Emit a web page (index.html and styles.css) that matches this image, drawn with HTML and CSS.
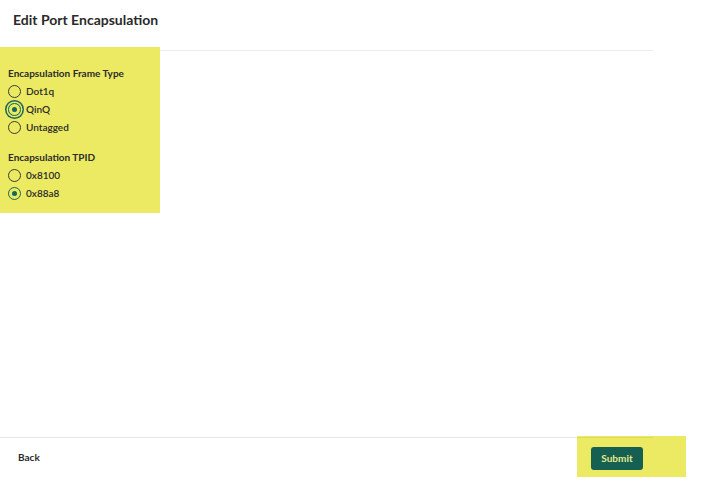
FILE: index.html
```html
<!DOCTYPE html>
<html lang="en">

<head>
    <meta charset="UTF-8">
    <meta name="viewport" content="width=device-width, initial-scale=1.0">
    <title>Edit Port Encapsulation</title>
    <link rel="stylesheet" href="styles.css">
</head>

<body>
    <div class="page">
        <div class="head">
            <h1>Edit Port Encapsulation</h1>
        </div>
        <div class="form">
            <div class="group-title">Encapsulation Frame Type</div>
            <label class="opt"><span class="radio"></span>Dot1q</label>
            <label class="opt"><span class="radio on focus"></span>QinQ</label>
            <label class="opt"><span class="radio"></span>Untagged</label>
            <div class="group-title second">Encapsulation TPID</div>
            <label class="opt"><span class="radio"></span>0x8100</label>
            <label class="opt"><span class="radio on"></span>0x88a8</label>
        </div>
        <div class="fill"></div>
        <div class="foot">
            <a class="back" href="javascript:;">Back</a>
            <div class="submit-wrap">
                <button class="submit">Submit</button>
            </div>
        </div>
    </div>
</body>

</html>
```

FILE: styles.css
```css
* {
    margin: 0;
    padding: 0;
    box-sizing: border-box;
}

body {
    font-family: Lato, "Liberation Sans", sans-serif;
    color: #2b2b2b;
    background: #fff;
}

.page {
    width: 653px;
    height: 483px;
    display: flex;
    flex-direction: column;
}

.head {
    height: 51px;
    border-bottom: 1px solid #ececec;
    padding: 11px 0 0 13px;
}

.head h1 {
    font-size: 14px;
    line-height: 18px;
    font-weight: 700;
    color: #2a2a2a;
}

.form {
    position: relative;
    margin-top: -4px;
    width: 160px;
    height: 166px;
    background: #ecea62;
    padding: 19px 8px 0 8px;
}

.group-title {
    font-size: 10px;
    line-height: 14px;
    font-weight: 700;
    margin-bottom: 2px;
}

.group-title.second {
    margin-top: 14px;
}

.opt {
    display: flex;
    align-items: center;
    height: 18px;
    font-size: 10px;
    font-weight: 600;
    gap: 5px;
}

.radio {
    width: 13px;
    height: 13px;
    border: 1.5px solid #3a3a30;
    border-radius: 50%;
    display: flex;
    align-items: center;
    justify-content: center;
}

.radio.on {
    border-color: #17665a;
}

.radio.on::after {
    content: "";
    width: 5px;
    height: 5px;
    border-radius: 50%;
    background: #17665a;
}

.radio.focus {
    box-shadow: 0 0 0 1.5px #ecea62, 0 0 0 3px #17665a;
}

.fill {
    flex: 1;
}

.foot {
    height: 46px;
    border-top: 1px solid #e6e6e6;
    display: flex;
    align-items: flex-start;
    justify-content: space-between;
}

.back {
    font-size: 10px;
    font-weight: 700;
    color: #2b2b2b;
    text-decoration: none;
    margin: 13px 0 0 18px;
    line-height: 12px;
}

.submit-wrap {
    margin: -2px -33px 0 0;
    width: 109px;
    height: 41px;
    background: linear-gradient(#dddb5c, #dddb5c) 0 1px / 76px 1px no-repeat, #ecea62;
    padding: 10px 0 0 14px;
}

.submit {
    width: 52px;
    height: 23px;
    border: none;
    border-radius: 3px;
    background: #155f53;
    color: #e9ea86;
    font-family: inherit;
    font-size: 10px;
    font-weight: 700;
}
```
